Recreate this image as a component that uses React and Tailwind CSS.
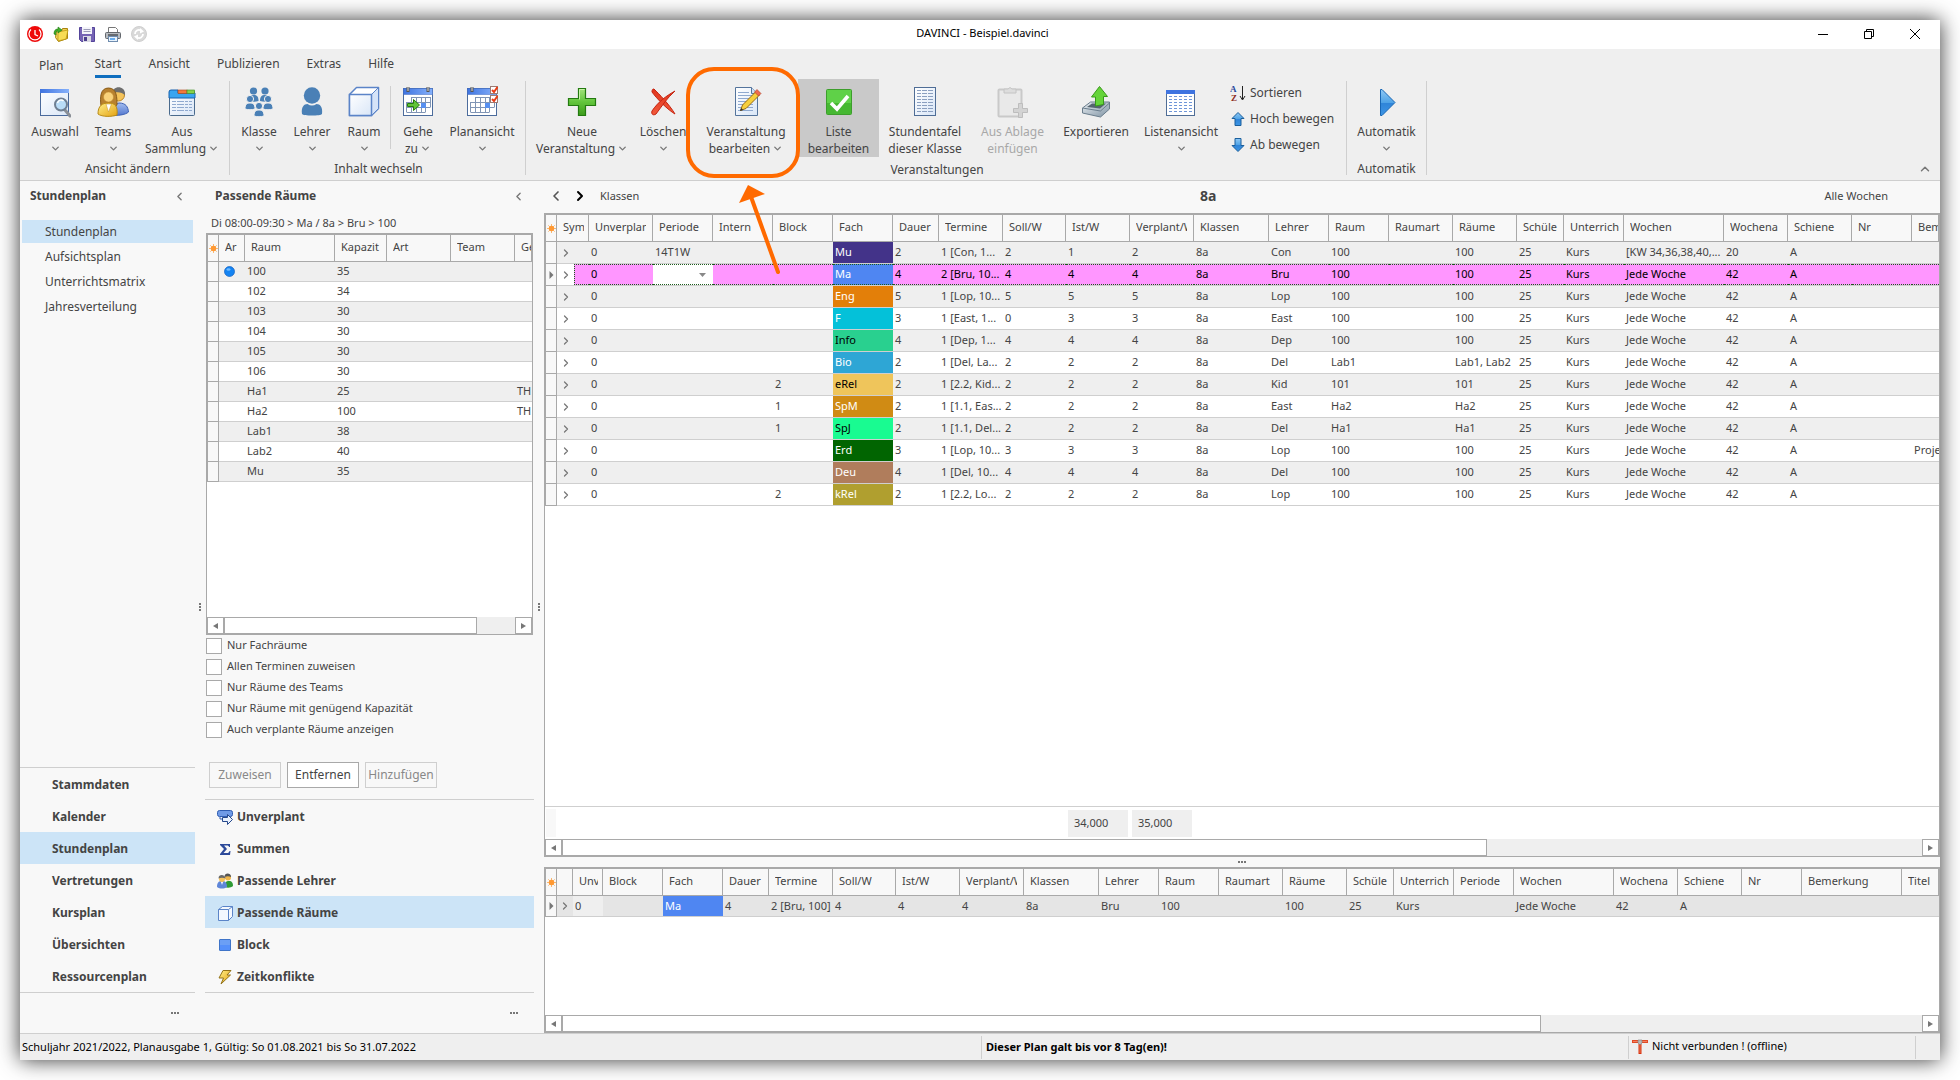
import React, { useState } from 'react';
import clsx from 'clsx';
import { ChevronLeft, ChevronRight, ChevronDown, ChevronUp } from 'lucide-react';

/* ---------- Icons ---------- */

const Grads = () => (
    <svg width="0" height="0" className="absolute" aria-hidden="true">
        <defs>
            <linearGradient id="gPaper" x1="0" y1="0" x2="1" y2="1">
                <stop offset="0" stopColor="#ffffff" />
                <stop offset="1" stopColor="#d9e6f7" />
            </linearGradient>
            <linearGradient id="gBlue" x1="0" y1="0" x2="0" y2="1">
                <stop offset="0" stopColor="#8fc8f5" />
                <stop offset="0.5" stopColor="#4fa3e6" />
                <stop offset="0.51" stopColor="#2f84d8" />
                <stop offset="1" stopColor="#3d95e4" />
            </linearGradient>
            <linearGradient id="gGreen" x1="0" y1="0" x2="0" y2="1">
                <stop offset="0" stopColor="#a4e37c" />
                <stop offset="0.5" stopColor="#62c53c" />
                <stop offset="1" stopColor="#3d9b1c" />
            </linearGradient>
            <linearGradient id="gBar" x1="0" y1="0" x2="1" y2="0">
                <stop offset="0" stopColor="#3f74e0" />
                <stop offset="1" stopColor="#86b1fb" />
            </linearGradient>
            <linearGradient id="gGold" x1="0" y1="0" x2="1" y2="1">
                <stop offset="0" stopColor="#fff08a" />
                <stop offset="1" stopColor="#e3a112" />
            </linearGradient>
            <linearGradient id="gRed" x1="0" y1="0" x2="0" y2="1">
                <stop offset="0" stopColor="#e0341c" />
                <stop offset="1" stopColor="#f25a3c" />
            </linearGradient>
            <linearGradient id="gShirt" x1="0" y1="0" x2="0" y2="1">
                <stop offset="0" stopColor="#a3bdf0" />
                <stop offset="1" stopColor="#5478cf" />
            </linearGradient>
            <linearGradient id="gTray" x1="0" y1="0" x2="1" y2="1">
                <stop offset="0" stopColor="#e9eef2" />
                <stop offset="1" stopColor="#7f93a3" />
            </linearGradient>
        </defs>
    </svg>
);

const Ico = ({ size = 32, children }) => (
    <svg width={size} height={size} viewBox={`0 0 ${size} ${size}`} fill="none" className="shrink-0" aria-hidden="true">
        {children}
    </svg>
);

const IconAuswahl = () => (
    <Ico>
        <rect x="1.5" y="3.5" width="28" height="26" fill="url(#gPaper)" stroke="#4a6a9c" />
        <rect x="1" y="3" width="29" height="4" fill="url(#gBar)" />
        <path d="M26 24l5 6" stroke="#8a8f96" strokeWidth="3" strokeLinecap="round" />
        <circle cx="22" cy="18.500" r="6" fill="#b9dcf7" stroke="#6f7f92" strokeWidth="2" />
        <path d="M18.500 17c1-3 4-4 6-2" stroke="#fff" strokeWidth="1.500" />
    </Ico>
);

const IconTeams = () => (
    <Ico>
        <path d="M14 29c0-8 2-11 8-12 7 0 9 4 9.500 9-3 3-12 4-17.500 3z" fill="url(#gShirt)" stroke="#3f62b5" />
        <circle cx="21.500" cy="9" r="6" fill="#f4c35a" stroke="#b98524" />
        <path d="M15 8c0-9 14-9 13 1-3-3-9-4-13-1z" fill="#6e6e6e" />
        <path d="M4 20C3 12 3 2 11.500 2S20 12 20 19c-4 3-12 3-16 1z" fill="#b8812f" stroke="#8a5c18" />
        <path d="M1 28c0-8 4-11 10.500-11S21 20 20 29c-5 2-15 2-19-1z" fill="url(#gGold)" stroke="#b98a14" />
        <circle cx="11.500" cy="11" r="5" fill="#f9d27a" stroke="#c08b2a" strokeWidth="0.500" />
        <path d="M9 18l2.500 8 3-8z" fill="#fff" stroke="#c9972a" strokeWidth="0.500" />
    </Ico>
);

const IconSammlung = () => (
    <Ico>
        <rect x="3.500" y="4.500" width="25" height="25" rx="1" fill="url(#gPaper)" stroke="#4a6a8c" />
        <path d="M3 12V6q0-2 2-2h7v3h17v5z" fill="#39a5f0" stroke="#1a62ae" />
        <rect x="12" y="4" width="9" height="3.500" fill="#f2793c" stroke="#a8441a" strokeWidth="0.600" />
        <rect x="21" y="4" width="7.500" height="3.500" fill="#86d14a" stroke="#3e8a1e" strokeWidth="0.600" />
        {[15, 18, 21, 24].map((y) => (
            <path key={y} d={`M6 ${y}.5h20`} stroke="#8fa9cf" strokeDasharray="4 1 7 1 3 1" />
        ))}
    </Ico>
);

const Person = ({ x, y }) => (
    <g transform={`translate(${x} ${y})`} fill="#4a80b6">
        <circle cx="0" cy="0" r="3.600" />
        <path d="M-5 10c0-5 2-6 5-6s5 1 5 6c-3 1-7 1-10 0z" />
    </g>
);

const IconKlasse = () => (
    <Ico>
        <Person x={10.5} y={5} />
        <Person x={22} y={5} />
        <g stroke="#f0f0f0" strokeWidth="1">
            <Person x={7} y={13} />
            <Person x={25} y={13} />
            <Person x={16} y={20} />
        </g>
    </Ico>
);

const IconLehrer = () => (
    <Ico>
        <circle cx="16" cy="9.500" r="8.200" fill="#4a80b6" />
        <path d="M6 28c-1-7 2-10 5.500-10 3 2 6 2 9 0 3.500 0 6.500 3 5.500 10-1 2-19 2-20 0z" fill="#4a80b6" />
    </Ico>
);

const IconRaum = () => (
    <Ico>
        <path d="M1.500 8.500l7-7h22v21l-7 7h-22z" fill="#fff" stroke="#5b84c8" strokeWidth="1.500" strokeLinejoin="round" />
        <path d="M23.500 8.500l7-7v21l-7 7z" fill="#d5e3f8" stroke="#5b84c8" />
        <rect x="1.500" y="8.500" width="22" height="21" fill="url(#gPaper)" stroke="#5b84c8" strokeWidth="1.500" />
    </Ico>
);

const CalendarBase = () => (
    <>
        <rect x="1.500" y="2.500" width="29" height="27" fill="#fff" stroke="#4c6c9c" />
        <rect x="1.500" y="2.500" width="29" height="6" fill="url(#gBar)" stroke="#3f6bc4" strokeWidth="0.500" />
        <path d="M6 1v5M26 1v5" stroke="#555" strokeWidth="3" />
        <path d="M6 1v4M26 1v4" stroke="#ddd" strokeWidth="1" />
        <path d="M9.500 11.500h19M4.500 16.500h24M4.500 21.500h24M4.500 26.500h19M4.500 16v10M9.500 11v15M14.500 11v15M19.500 11v15M23.500 11v15M28.500 11v10" stroke="#8095b5" />
        <rect x="19" y="17" width="5" height="5" fill="#5790f0" />
    </>
);

const IconGeheZu = () => (
    <Ico>
        <CalendarBase />
        <path d="M5.500 17.500h6v-4l6 5.500-6 5.500v-4h-6z" fill="#5fc43a" stroke="#267d0c" />
    </Ico>
);

const IconPlanansicht = () => (
    <Ico>
        <CalendarBase />
        <rect x="24.500" y="0.500" width="7" height="7" fill="#fff" stroke="#9c7a72" />
        <rect x="24.500" y="9.500" width="7" height="7" fill="#fff" stroke="#9c7a72" />
        <path d="M26 4l2 2 3.500-5M26 13l2 2 3.500-5" stroke="#ea3a12" strokeWidth="2" />
    </Ico>
);

const IconNeue = () => (
    <Ico>
        <path d="M12.500 2.500h7v10h10v7h-10v10h-7v-10h-10v-7h10z" fill="url(#gGreen)" stroke="#237a10" strokeWidth="1.200" />
        <path d="M13.500 13.500v-10h5" stroke="#c6f2a6" />
    </Ico>
);

const IconLoeschen = () => (
    <Ico>
        <path d="M7 3c5 5 15 15 21 25-7-4-18-15-23-22 0-3 1-3 2-3z" fill="url(#gRed)" stroke="#c42410" />
        <path d="M28 5C20 12 15 20 9 28c-3 2-5 0-4-3C11 16 19 10 28 5z" fill="url(#gRed)" stroke="#c42410" />
    </Ico>
);

const IconBearbeiten = () => (
    <Ico>
        <path d="M5.500 1.500h16l6 6v22h-22z" fill="url(#gPaper)" stroke="#54749c" />
        <path d="M21.500 1.500v6h6" fill="#cfdff4" stroke="#54749c" />
        {[6, 9, 12, 15, 18, 21, 24].map((y) => (
            <path key={y} d={`M8 ${y}.5h${y < 9 ? 11 : 15}`} stroke="#8fa9cf" />
        ))}
        <path d="M10.500 24.500l2-5.500L26 5.500l3.500 3.500L16 22.500z" fill="#f6cf3c" stroke="#9a6a10" />
        <path d="M24.500 6l2.500-2.500 4 4L28.500 10z" fill="#ef6a4e" stroke="#a83a22" strokeWidth="0.600" />
        <path d="M10 25l1.200-3 2 2z" fill="#333" />
    </Ico>
);

const IconListe = () => (
    <Ico>
        <rect x="3.500" y="3.500" width="25" height="25" rx="1" fill="#5fd148" stroke="#3d9e2c" />
        <path d="M4 17h24v11H4z" fill="#46b832" />
        <path d="M8 17l6 6L25 10" stroke="#fff" strokeWidth="3.600" />
    </Ico>
);

const IconStundentafel = () => (
    <Ico>
        <rect x="5.500" y="1.500" width="21" height="28" fill="url(#gPaper)" stroke="#4f6d96" />
        {[4, 7, 10, 13, 16, 19, 22, 25].map((y) => (
            <path key={y} d={`M8 ${y}.5h16`} stroke="#8a9fc0" strokeDasharray="4 1 5 1 5" />
        ))}
    </Ico>
);

const IconAblage = () => (
    <Ico>
        <rect x="1.500" y="3.500" width="23" height="27" rx="1" fill="#e9e9e9" stroke="#c9c9c9" strokeWidth="2" />
        <path d="M7 7V3h4q2-3 4 0h4v4z" fill="#ddd" stroke="#c4c4c4" />
        <path d="M21.500 17.500h4v5h5v4h-5v5h-4v-5h-5v-4h5z" fill="#d3d3d3" stroke="#bdbdbd" />
    </Ico>
);

const IconExport = () => (
    <Ico>
        <path d="M2.500 22l8-6h19v7l-9 8-18-4z" fill="url(#gTray)" stroke="#6a7d8c" />
        <path d="M2.500 22l18 3 9-8" stroke="#6a7d8c" />
        <path d="M7 21l5-3.500h14l-6 5z" fill="#54646f" />
        <path d="M19.500 0.500l8 10h-4v8l-8 1.500v-9h-4z" fill="#65d43a" stroke="#38991a" />
    </Ico>
);

const IconListenansicht = () => (
    <Ico>
        <rect x="1.500" y="4.500" width="28" height="25" fill="#fff" stroke="#4f6d96" />
        <rect x="1" y="4" width="29" height="4" fill="#3f74e0" />
        {[10, 13, 16, 19, 22, 25].map((y) => (
            <path key={y} d={`M4 ${y}.5h23`} stroke="#6f96d8" strokeDasharray="3 2" />
        ))}
    </Ico>
);

const IconAutomatik = () => (
    <Ico>
        <path d="M9.500 3.500h1.500L24 16.500 11 29.500H9.500z" fill="url(#gBlue)" stroke="#1766b4" />
    </Ico>
);

const IconSort = () => (
    <Ico size={16}>
        <text x="0" y="7" fontSize="9" fontWeight="700" fontFamily="Liberation Serif, serif" fill="#27479c">A</text>
        <text x="1" y="16" fontSize="9" fontWeight="700" fontFamily="Liberation Serif, serif" fill="#8c2b20">Z</text>
        <path d="M12.500 1v13M10 11l2.500 4 2.500-4" stroke="#222" />
    </Ico>
);

const IconUp = () => (
    <Ico size={16}>
        <path d="M8 1.500l6 6h-3v7H5v-7H2z" fill="url(#gBlue)" stroke="#1b5f9c" />
    </Ico>
);

const IconDown = () => (
    <Ico size={16}>
        <path d="M8 14.500l6-6h-3v-7H5v7H2z" fill="url(#gBlue)" stroke="#1b5f9c" />
    </Ico>
);

const IconLogo = () => (
    <Ico size={16}>
        <circle cx="8" cy="8" r="8" fill="#ee0a0a" />
        <path d="M4 3.500a6 6 0 1 0 8 0" stroke="#fff" strokeWidth="1.200" />
        <path d="M8 4v4.500l3 1.500" stroke="#fff" strokeWidth="1.300" />
    </Ico>
);

const IconOpen = () => (
    <Ico size={16}>
        <path d="M3.500 4.500l5 1 1-3h5v10l-9 3-3-4z" fill="url(#gGold)" stroke="#a8850e" />
        <path d="M5 6l10-2-2 9-8 2z" fill="#f8dc55" stroke="#b8940f" strokeWidth="0.700" />
        <path d="M1 8c0-3 1-5 4-5V1l4 3-4 3V5C3 5 2.500 6 3 9z" fill="#3fae2a" stroke="#1f7a10" strokeWidth="0.600" />
    </Ico>
);

const IconSave = () => (
    <Ico size={16}>
        <path d="M0.500 1.500h15v14h-13l-2-2z" fill="#7563b4" stroke="#54449a" />
        <rect x="3" y="1" width="10" height="7" fill="#f4f4fa" />
        <path d="M4.500 3.500h7M4.500 5.500h7" stroke="#9c9cb8" />
        <rect x="4" y="10" width="8" height="6" fill="#d9d9e4" />
        <rect x="5" y="11" width="3" height="4" fill="#4b3d8c" />
    </Ico>
);

const IconPrint = () => (
    <Ico size={16}>
        <path d="M3.500 6.500v-5h7l2 2v3" fill="#fff" stroke="#777" />
        <rect x="0.500" y="6.500" width="15" height="6" rx="1" fill="#b7bbc0" stroke="#63676c" />
        <path d="M3 9h10" stroke="#4d5156" strokeWidth="1.500" />
        <rect x="3.500" y="10.500" width="9" height="5" fill="#e8f3fd" stroke="#6f8cae" />
        <rect x="5" y="12" width="5" height="2" fill="#69aef0" />
    </Ico>
);

const IconSync = () => (
    <Ico size={16}>
        <circle cx="8" cy="8" r="7.500" fill="#d9d9d9" stroke="#cfcfcf" />
        <path d="M4 8c0-3 3-5 6-3.500M12 8c0 3-3 5-6 3.500" stroke="#fff" strokeWidth="1.800" />
        <path d="M9 2l4 3.500-4 2zM7 14l-4-3.500 4-2z" fill="#fff" />
    </Ico>
);

const IconUnverplant = () => (
    <Ico size={16}>
        <rect x="0.500" y="1.500" width="15" height="6" rx="2" fill="#6f9ae6" stroke="#2f5cb0" />
        <path d="M3 8v2h3" stroke="#2f5cb0" />
        <path d="M5.500 8.500h5v-3l5 5-5 5v-3h-5z" fill="#e9f1fd" stroke="#27498c" />
    </Ico>
);

const IconSumme = () => (
    <Ico size={16}>
        <path d="M3 3h10v3h-1c0-1-1-1.500-2-1.500H7L10 8l-3.500 4H10c1.500 0 2-.5 2.500-2h1L13 14H3v-1l4-5-4-4z" fill="#2d4a9a" />
    </Ico>
);

const IconLehrerPaar = () => (
    <Ico size={16}>
        <path d="M8 14c0-5 1-6 4-6s4 2 4 5c-2 2-6 2-8 1z" fill="#2f9a34" />
        <circle cx="11" cy="4.500" r="3" fill="#f0b64a" />
        <path d="M7.500 4c0-5 7-4 6.500 0-2-1-4-1-6.500 0z" fill="#555" />
        <path d="M0 14c0-5 2-6 5-6s5 1 5 6c-3 2-7 2-10 0z" fill="#5f86d8" />
        <circle cx="5" cy="6" r="3" fill="#f6c45c" />
        <path d="M1.500 5.500c0-5 7-4 7 0-2-1-5-1-7 0z" fill="#6a6a6a" />
        <path d="M4 9l1 3 1-3z" fill="#fff" />
    </Ico>
);

const IconCube = () => (
    <Ico size={16}>
        <path d="M1.500 4.500l4-3h10v10l-4 4h-10z" fill="#f4f8fe" stroke="#5b84c8" />
        <path d="M1.500 4.500h10v11M11.500 4.500l4-3" stroke="#5b84c8" />
    </Ico>
);

const IconBlock = () => (
    <Ico size={16}>
        <rect x="2.500" y="2.500" width="11" height="11" rx="0.500" fill="#6b9ff5" stroke="#3f74c8" />
        <path d="M3 8h10v5H3z" fill="#5590fa" />
    </Ico>
);

const IconBlitz = () => (
    <Ico size={16}>
        <path d="M6 1.500h8l-4 4.500h3.500L4 15l2.500-6H2z" fill="url(#gGold)" stroke="#93731a" strokeLinejoin="round" />
    </Ico>
);

const IconOffline = () => (
    <Ico size={16}>
        <path d="M0 2.500h16" stroke="#e24a26" strokeWidth="3" />
        <path d="M8 5v10" stroke="#d8300c" strokeWidth="3" />
        <path d="M1 2.500h14M8 6v8" stroke="#f79a7a" strokeWidth="0.700" />
        <path d="M6 1h4v3L8 6 6 4z" fill="#b9b9b9" stroke="#7c7c7c" strokeWidth="0.600" />
    </Ico>
);

const Sun = () => (
    <svg width="9" height="9" viewBox="0 0 9 9" className="mx-auto" aria-hidden="true">
        <path d="M4.500 0v9M0 4.500h9M1.300 1.300l6.400 6.400M7.700 1.300L1.300 7.700" stroke="#f9b873" strokeWidth="1" />
        <circle cx="4.500" cy="4.500" r="2.700" fill="#ff9933" />
    </svg>
);

const RowMarker = () => (
    <svg width="5" height="8" viewBox="0 0 5 8" className="mx-auto" aria-hidden="true">
        <path d="M0.500 0v8l4-4z" fill="#777" />
    </svg>
);

const Dots = ({ vertical }) => (
    <span className={clsx("flex gap-px", vertical && "flex-col")}>
        <i className="w-0.5 h-0.5 bg-[#777]" />
        <i className="w-0.5 h-0.5 bg-[#777]" />
        <i className="w-0.5 h-0.5 bg-[#777]" />
    </span>
);

/* ---------- Data ---------- */

const TABS = ['Start', 'Ansicht', 'Publizieren', 'Extras', 'Hilfe'];

const VIEWS = ['Stundenplan', 'Aufsichtsplan', 'Unterrichtsmatrix', 'Jahresverteilung'];

const MODULES = ['Stammdaten', 'Kalender', 'Stundenplan', 'Vertretungen', 'Kursplan', 'Übersichten', 'Ressourcenplan'];

const PANELS = [
    { label: 'Unverplant', Icon: IconUnverplant },
    { label: 'Summen', Icon: IconSumme },
    { label: 'Passende Lehrer', Icon: IconLehrerPaar },
    { label: 'Passende Räume', Icon: IconCube },
    { label: 'Block', Icon: IconBlock },
    { label: 'Zeitkonflikte', Icon: IconBlitz },
];

const ROOM_COLS = [
    { label: 'Ar', w: 'w-[26px] pr-[4px]' },
    { label: 'Raum', w: 'w-[90px]' },
    { label: 'Kapazit', w: 'w-[52px] pr-[4px]' },
    { label: 'Art', w: 'w-[64px]' },
    { label: 'Team', w: 'w-[64px]' },
    { label: 'Ge', w: 'pr-0' },
];

const ROOMS = [
    ['100', '35', ''],
    ['102', '34', ''],
    ['103', '30', ''],
    ['104', '30', ''],
    ['105', '30', ''],
    ['106', '30', ''],
    ['Ha1', '25', 'TH'],
    ['Ha2', '100', 'TH'],
    ['Lab1', '38', ''],
    ['Lab2', '40', ''],
    ['Mu', '35', ''],
];

const FILTERS = [
    'Nur Fachräume',
    'Allen Terminen zuweisen',
    'Nur Räume des Teams',
    'Nur Räume mit genügend Kapazität',
    'Auch verplante Räume anzeigen',
];

const COLS = [
    { key: 'sym', label: 'Sym', w: 'w-[32px] pr-[4px]' },
    { key: 'unv', label: 'Unverplan', w: 'w-[64px] pr-[6px]' },
    { key: 'periode', label: 'Periode', w: 'w-[60px]' },
    { key: 'intern', label: 'Intern', w: 'w-[60px]' },
    { key: 'block', label: 'Block', w: 'w-[60px]' },
    { key: 'fach', label: 'Fach', w: 'w-[60px]' },
    { key: 'dauer', label: 'Dauer', w: 'w-[46px] pr-[4px]' },
    { key: 'termine', label: 'Termine', w: 'w-[64px]' },
    { key: 'soll', label: 'Soll/W', w: 'w-[63px]' },
    { key: 'ist', label: 'Ist/W', w: 'w-[64px]' },
    { key: 'verplant', label: 'Verplant/W', w: 'w-[64px] pr-[6px]' },
    { key: 'klassen', label: 'Klassen', w: 'w-[75px]' },
    { key: 'lehrer', label: 'Lehrer', w: 'w-[60px]' },
    { key: 'raum', label: 'Raum', w: 'w-[60px]' },
    { key: 'raumart', label: 'Raumart', w: 'w-[64px]' },
    { key: 'raeume', label: 'Räume', w: 'w-[64px]' },
    { key: 'schueler', label: 'Schüle', w: 'w-[47px] pr-[4px]' },
    { key: 'unterricht', label: 'Unterrich', w: 'w-[60px] pr-[4px]' },
    { key: 'wochen', label: 'Wochen', w: 'w-[100px]' },
    { key: 'anzahl', label: 'Wochena', w: 'w-[64px] pr-[4px]' },
    { key: 'schiene', label: 'Schiene', w: 'w-[64px]' },
    { key: 'nr', label: 'Nr', w: 'w-[60px]' },
    { key: 'bemerkung', label: 'Bem', w: 'pr-0' },
];

const DETAIL_COLS = [
    { key: 'sym', label: '', w: 'w-[16px]' },
    { key: 'unv', label: 'Unv', w: 'w-[30px] pr-[4px]' },
    { key: 'block', label: 'Block', w: 'w-[60px]' },
    { key: 'fach', label: 'Fach', w: 'w-[60px]' },
    { key: 'dauer', label: 'Dauer', w: 'w-[46px] pr-[4px]' },
    { key: 'termine', label: 'Termine', w: 'w-[64px]' },
    { key: 'soll', label: 'Soll/W', w: 'w-[63px]' },
    { key: 'ist', label: 'Ist/W', w: 'w-[64px]' },
    { key: 'verplant', label: 'Verplant/W', w: 'w-[64px] pr-[6px]' },
    { key: 'klassen', label: 'Klassen', w: 'w-[75px]' },
    { key: 'lehrer', label: 'Lehrer', w: 'w-[60px]' },
    { key: 'raum', label: 'Raum', w: 'w-[60px]' },
    { key: 'raumart', label: 'Raumart', w: 'w-[64px]' },
    { key: 'raeume', label: 'Räume', w: 'w-[64px]' },
    { key: 'schueler', label: 'Schüle', w: 'w-[47px] pr-[4px]' },
    { key: 'unterricht', label: 'Unterrich', w: 'w-[60px] pr-[4px]' },
    { key: 'periode', label: 'Periode', w: 'w-[60px]' },
    { key: 'wochen', label: 'Wochen', w: 'w-[100px]' },
    { key: 'anzahl', label: 'Wochena', w: 'w-[64px] pr-[4px]' },
    { key: 'schiene', label: 'Schiene', w: 'w-[64px]' },
    { key: 'nr', label: 'Nr', w: 'w-[60px]' },
    { key: 'bemerkung', label: 'Bemerkung', w: 'w-[100px]' },
    { key: 'titel', label: 'Titel', w: '' },
];

const BASE = { unv: '0', klassen: '8a', schueler: '25', unterricht: 'Kurs', wochen: 'Jede Woche', anzahl: '42', schiene: 'A' };

const EVENTS = [
    { ...BASE, periode: '14T1W', fach: 'Mu', color: 'bg-[#433389] text-white', dauer: '2', termine: '1 [Con, 1...', soll: '2', ist: '1', verplant: '2', lehrer: 'Con', raum: '100', raeume: '100', wochen: '[KW 34,36,38,40,...', anzahl: '20' },
    { ...BASE, fach: 'Ma', color: 'bg-[#4f86f2] text-white', dauer: '4', termine: '2 [Bru, 10...', soll: '4', ist: '4', verplant: '4', lehrer: 'Bru', raum: '100', raeume: '100', selected: true },
    { ...BASE, fach: 'Eng', color: 'bg-[#e37f09] text-white', dauer: '5', termine: '1 [Lop, 10...', soll: '5', ist: '5', verplant: '5', lehrer: 'Lop', raum: '100', raeume: '100' },
    { ...BASE, fach: 'F', color: 'bg-[#04c1d9] text-white', dauer: '3', termine: '1 [East, 1...', soll: '0', ist: '3', verplant: '3', lehrer: 'East', raum: '100', raeume: '100' },
    { ...BASE, fach: 'Info', color: 'bg-[#29d08f] text-black', dauer: '4', termine: '1 [Dep, 1...', soll: '4', ist: '4', verplant: '4', lehrer: 'Dep', raum: '100', raeume: '100' },
    { ...BASE, fach: 'Bio', color: 'bg-[#2ea6d5] text-white', dauer: '2', termine: '1 [Del, La...', soll: '2', ist: '2', verplant: '2', lehrer: 'Del', raum: 'Lab1', raeume: 'Lab1, Lab2' },
    { ...BASE, block: '2', fach: 'eRel', color: 'bg-[#efc55b] text-black', dauer: '2', termine: '1 [2.2, Kid...', soll: '2', ist: '2', verplant: '2', lehrer: 'Kid', raum: '101', raeume: '101' },
    { ...BASE, block: '1', fach: 'SpM', color: 'bg-[#d08b14] text-white', dauer: '2', termine: '1 [1.1, Eas...', soll: '2', ist: '2', verplant: '2', lehrer: 'East', raum: 'Ha2', raeume: 'Ha2' },
    { ...BASE, block: '1', fach: 'SpJ', color: 'bg-[#19fb91] text-black', dauer: '2', termine: '1 [1.1, Del...', soll: '2', ist: '2', verplant: '2', lehrer: 'Del', raum: 'Ha1', raeume: 'Ha1' },
    { ...BASE, fach: 'Erd', color: 'bg-[#016501] text-white', dauer: '3', termine: '1 [Lop, 10...', soll: '3', ist: '3', verplant: '3', lehrer: 'Lop', raum: '100', raeume: '100', bemerkung: 'Proje' },
    { ...BASE, fach: 'Deu', color: 'bg-[#b07d5c] text-white', dauer: '4', termine: '1 [Del, 10...', soll: '4', ist: '4', verplant: '4', lehrer: 'Del', raum: '100', raeume: '100' },
    { ...BASE, block: '2', fach: 'kRel', color: 'bg-[#b09f2f] text-white', dauer: '2', termine: '1 [2.2, Lo...', soll: '2', ist: '2', verplant: '2', lehrer: 'Lop', raum: '100', raeume: '100' },
];

const DETAIL = { ...EVENTS[1], termine: '2 [Bru, 100]' };

/* ---------- Shared parts ---------- */

const RibbonButton = ({ icon, lines, arrow, w, active, disabled }) => (
    <button
        type="button"
        disabled={disabled}
        className={clsx(
            "h-[78px] pt-[7px] flex flex-col items-center shrink-0 whitespace-nowrap",
            w,
            active && "bg-[#c9c9c9]",
            disabled && "text-[#a8a8a8]"
        )}
    >
        {icon}
        <span className="mt-[5px] leading-[17px]">{lines[0]}</span>
        <span className="h-[17px] leading-[17px] flex items-center gap-0.5">
            {lines[1]}
            {arrow && <ChevronDown size={11} strokeWidth={3} className="text-[#777]" />}
        </span>
    </button>
);

const RibbonGroup = ({ title, children, className }) => (
    <div className={clsx("flex flex-col shrink-0", className)}>
        <div className="flex">{children}</div>
        <div className="h-[22px] leading-[23px] text-center">{title}</div>
    </div>
);

const RibbonLine = () => <div className="w-px h-[94px] mt-0.5 bg-[#cfcfcf] shrink-0" />;

const HeadCell = ({ label, w }) => (
    <th className={clsx("h-[27px] pl-[6px] pb-0.5 border-r border-b border-[#a9a9a9] bg-[#f8f8f8] font-normal text-left", w)}>
        <div className="overflow-hidden whitespace-nowrap">{label}</div>
    </th>
);

const MarkHead = () => (
    <th className="w-[12px] h-[27px] border-x border-b border-[#a9a9a9] bg-[#f8f8f8]" aria-label="Spalten">
        <Sun />
    </th>
);

const ScrollBar = ({ thumb }) => (
    <div className="h-[17px] flex bg-[#efefef] shrink-0">
        <button type="button" aria-label="Nach links" className="w-[17px] flex items-center justify-center bg-white border border-[#a9a9a9]">
            <svg width="5" height="6" viewBox="0 0 5 6"><path d="M5 0v6L0 3z" fill="#777" /></svg>
        </button>
        <div className="flex-1">
            <div className={clsx("h-full bg-white border border-[#a9a9a9]", thumb)} />
        </div>
        <button type="button" aria-label="Nach rechts" className="w-[17px] flex items-center justify-center bg-white border border-[#a9a9a9]">
            <svg width="5" height="6" viewBox="0 0 5 6"><path d="M0 0v6l5-3z" fill="#777" /></svg>
        </button>
    </div>
);

/* ---------- Window areas ---------- */

const TitleBar = () => (
    <header className="h-[29px] pb-0.5 flex items-center bg-white text-black shrink-0">
        <div className="flex-1 flex items-center gap-[10px] pl-[7px]">
            <IconLogo />
            <button type="button" aria-label="Öffnen"><IconOpen /></button>
            <button type="button" aria-label="Speichern"><IconSave /></button>
            <button type="button" aria-label="Drucken"><IconPrint /></button>
            <button type="button" aria-label="Aktualisieren" disabled><IconSync /></button>
        </div>
        <h1>DAVINCI - Beispiel.davinci</h1>
        <div className="flex-1 flex justify-end pr-0.5">
            <button type="button" aria-label="Minimieren" className="w-[46px] h-[26px] flex items-center justify-center">
                <svg width="10" height="10" viewBox="0 0 10 10"><path d="M0 5.500h10" stroke="#000" /></svg>
            </button>
            <button type="button" aria-label="Wiederherstellen" className="w-[46px] h-[26px] flex items-center justify-center">
                <svg width="10" height="10" viewBox="0 0 10 10" fill="none"><path d="M0.500 2.500h7v7h-7zM2.500 2.500v-2h7v7h-2" stroke="#000" /></svg>
            </button>
            <button type="button" aria-label="Schließen" className="w-[46px] h-[26px] flex items-center justify-center">
                <svg width="10" height="10" viewBox="0 0 10 10"><path d="M0 0l10 10M10 0L0 10" stroke="#000" /></svg>
            </button>
        </div>
    </header>
);

const Ribbon = () => (
    <div className="bg-[#efefef] border-b border-[#cfcfcf] text-xs shrink-0">
        <nav className="h-[30px] pt-1 pl-[19px] flex gap-[27px]">
            <button type="button" className="h-[25px] leading-[25px] mr-1">Plan</button>
            {TABS.map((t) => (
                <button
                    key={t}
                    type="button"
                    className={clsx("h-[25px] leading-[22px] border-b-[3px]", t === 'Start' ? "border-[#106ebe]" : "border-transparent")}
                >
                    {t}
                </button>
            ))}
        </nav>
        <div className="flex">
            <RibbonGroup title="Ansicht ändern" className="w-[209px] pl-[6px]">
                <RibbonButton icon={<IconAuswahl />} lines={['Auswahl']} arrow w="w-[58px]" />
                <RibbonButton icon={<IconTeams />} lines={['Teams']} arrow w="w-[58px]" />
                <RibbonButton icon={<IconSammlung />} lines={['Aus', 'Sammlung']} arrow w="w-[80px]" />
            </RibbonGroup>
            <RibbonLine />
            <RibbonGroup title="Inhalt wechseln" className="w-[295px] pl-0.5">
                <RibbonButton icon={<IconKlasse />} lines={['Klasse']} arrow w="w-[54px]" />
                <RibbonButton icon={<IconLehrer />} lines={['Lehrer']} arrow w="w-[52px]" />
                <RibbonButton icon={<IconRaum />} lines={['Raum']} arrow w="w-[52px]" />
                <div className="w-px h-[63px] mt-[7px] bg-[#cfcfcf]" />
                <RibbonButton icon={<IconGeheZu />} lines={['Gehe', 'zu']} arrow w="w-[54px]" />
                <RibbonButton icon={<IconPlanansicht />} lines={['Planansicht']} arrow w="w-[74px]" />
            </RibbonGroup>
            <RibbonLine />
            <RibbonGroup title="Veranstaltungen" className="w-[820px] pl-[6px] pr-1">
                <RibbonButton icon={<IconNeue />} lines={['Neue', 'Veranstaltung']} arrow w="w-[100px]" />
                <RibbonButton icon={<IconLoeschen />} lines={['Löschen']} arrow w="w-[62px]" />
                <RibbonButton icon={<IconBearbeiten />} lines={['Veranstaltung', 'bearbeiten']} arrow w="w-[104px]" />
                <RibbonButton icon={<IconListe />} lines={['Liste', 'bearbeiten']} active w="w-[81px]" />
                <RibbonButton icon={<IconStundentafel />} lines={['Stundentafel', 'dieser Klasse']} w="w-[92px]" />
                <RibbonButton icon={<IconAblage />} lines={['Aus Ablage', 'einfügen']} disabled w="w-[83px]" />
                <RibbonButton icon={<IconExport />} lines={['Exportieren']} w="w-[84px]" />
                <RibbonButton icon={<IconListenansicht />} lines={['Listenansicht']} arrow w="w-[86px]" />
                <div className="flex flex-col pt-px pl-[6px]">
                    <button type="button" className="h-[26px] flex items-center gap-1"><IconSort />Sortieren</button>
                    <button type="button" className="h-[26px] flex items-center gap-1 whitespace-nowrap"><IconUp />Hoch bewegen</button>
                    <button type="button" className="h-[26px] flex items-center gap-1 whitespace-nowrap"><IconDown />Ab bewegen</button>
                </div>
            </RibbonGroup>
            <RibbonLine />
            <RibbonGroup title="Automatik" className="w-[79px]">
                <RibbonButton icon={<IconAutomatik />} lines={['Automatik']} arrow w="w-[79px]" />
            </RibbonGroup>
            <RibbonLine />
            <button type="button" aria-label="Menüband einklappen" className="ml-auto mr-2 self-end mb-1 text-[#777]">
                <ChevronUp size={14} strokeWidth={2.5} />
            </button>
        </div>
    </div>
);

const PanelTitle = ({ children }) => (
    <div className="h-8 pb-0.5 pl-[10px] pr-[9px] flex items-center justify-between text-xs font-bold shrink-0">
        <h2>{children}</h2>
        <button type="button" aria-label="Einklappen" className="text-[#777]"><ChevronLeft size={13} strokeWidth={2.5} /></button>
    </div>
);

const PanelFooter = () => (
    <div className="h-[41px] border-t border-[#cfcfcf] flex items-center justify-end pr-4 shrink-0">
        <button type="button" aria-label="Mehr"><Dots /></button>
    </div>
);

const Sidebar = () => (
    <aside className="w-[175px] flex flex-col shrink-0">
        <PanelTitle>Stundenplan</PanelTitle>
        <nav className="flex-1 flex flex-col gap-0.5 pt-[7px] px-0.5 text-xs">
            {VIEWS.map((v, i) => (
                <a key={v} href="#" className={clsx("h-[23px] leading-[23px] pl-[23px]", i === 0 && "bg-[#cce4f7]")}>{v}</a>
            ))}
        </nav>
        <nav className="border-t border-[#cfcfcf] flex flex-col text-xs font-bold">
            {MODULES.map((m) => (
                <a key={m} href="#" className={clsx("h-8 leading-[34px] pl-8", m === 'Stundenplan' && "bg-[#cce4f7]")}>{m}</a>
            ))}
        </nav>
        <PanelFooter />
    </aside>
);

const RoomCell = ({ children }) => (
    <td className="border-b border-[#cfcfcf] pl-[2px] pb-[2px] leading-[17px] overflow-hidden">{children}</td>
);

const RoomTable = () => (
    <table className="w-full table-fixed border-separate border-spacing-0">
        <thead>
            <tr>
                <MarkHead />
                {ROOM_COLS.map((c) => <HeadCell key={c.label} label={c.label} w={c.w} />)}
            </tr>
        </thead>
        <tbody>
            {ROOMS.map(([raum, kap, geb], i) => (
                <tr key={raum} className={i % 2 ? "bg-white" : "bg-[#efefef]"}>
                    <td className="h-5 bg-[#f8f8f8] border-x border-b border-[#a9a9a9]" />
                    <td className="border-b border-[#cfcfcf] pl-[5px]">
                        {i === 0 && (
                            <svg width="11" height="11" viewBox="0 0 11 11" aria-hidden="true">
                                <circle cx="5.500" cy="5.500" r="5" fill="#1383f2" stroke="#0f5fc0" strokeWidth="0.700" />
                                <ellipse cx="4.500" cy="3.500" rx="2" ry="1.300" fill="#6dbaff" />
                            </svg>
                        )}
                    </td>
                    <RoomCell>{raum}</RoomCell>
                    <RoomCell>{kap}</RoomCell>
                    <RoomCell />
                    <RoomCell />
                    <RoomCell>{geb}</RoomCell>
                </tr>
            ))}
        </tbody>
    </table>
);

const RoomPanel = () => {
    const [checked, setChecked] = useState({});

    return (
        <section className="w-[329px] flex flex-col shrink-0">
            <PanelTitle>Passende Räume</PanelTitle>
            <div className="h-5 leading-5 pl-[6px]">Di 08:00-09:30 &gt; Ma / 8a &gt; Bru &gt; 100</div>
            <div className="flex-1 flex flex-col ml-px mr-px bg-white border border-t-2 border-[#a9a9a9] overflow-hidden">
                <div className="flex-1"><RoomTable /></div>
                <ScrollBar thumb="w-[87%]" />
            </div>
            <div className="pl-px">
                {FILTERS.map((f) => (
                    <label key={f} className="h-[21px] flex items-center gap-[5px]">
                        <input
                            type="checkbox"
                            checked={!!checked[f]}
                            onChange={(e) => setChecked({ ...checked, [f]: e.target.checked })}
                            className="appearance-none w-4 h-4 bg-white border border-[#a9a9a9] checked:bg-[#106ebe]"
                        />
                        {f}
                    </label>
                ))}
            </div>
            <div className="flex gap-[6px] pt-[22px] pb-[11px] pl-1">
                <button type="button" disabled className="w-[72px] h-[26px] text-xs border border-[#cfcfcf] text-[#888]">Zuweisen</button>
                <button type="button" className="w-[72px] h-[26px] text-xs border border-[#a9a9a9] bg-white">Entfernen</button>
                <button type="button" disabled className="w-[72px] h-[26px] text-xs border border-[#cfcfcf] text-[#888]">Hinzufügen</button>
            </div>
            <nav className="border-t border-[#cfcfcf] flex flex-col text-xs font-bold">
                {PANELS.map(({ label, Icon }) => (
                    <a key={label} href="#" className={clsx("h-8 pt-px flex items-center gap-1 pl-3", label === 'Passende Räume' && "bg-[#cce4f7]")}>
                        <Icon />
                        {label}
                    </a>
                ))}
            </nav>
            <PanelFooter />
        </section>
    );
};

const EventCell = ({ col, row, detail }) => {
    const selected = row.selected && !detail;
    const line = selected && "border-y border-dotted border-[#1c5c1c]";
    const h = detail ? "h-5 leading-5" : selected ? "h-[21px] leading-[17px]" : "h-[21px] leading-[19px]";

    if (col.key === 'sym') {
        return (
            <td className="border-b border-[#cfcfcf]">
                <div className="flex items-center">
                    <button type="button" aria-label="Aufklappen" className={clsx("h-5 flex items-center justify-center text-[#777]", detail ? "w-4" : "w-[17px]")}>
                        <ChevronRight size={12} strokeWidth={2.5} />
                    </button>
                    {selected && <div className={clsx("flex-1 bg-[#ff96ff] border-l", h, line)} />}
                </div>
            </td>
        );
    }

    if (col.key === 'periode' && selected) {
        return (
            <td className="border-b border-[#cfcfcf]">
                <div className={clsx("flex items-center bg-white pr-[7px]", h, line)}>
                    <select aria-label="Periode" className="appearance-none w-full h-[19px] outline-none">
                        <option></option>
                        <option>14T1W</option>
                    </select>
                    <svg width="7" height="4" viewBox="0 0 7 4" className="shrink-0" aria-hidden="true"><path d="M0 0h7L3.500 4z" fill="#888" /></svg>
                </div>
            </td>
        );
    }

    return (
        <td className="border-b border-[#cfcfcf]">
            <div
                className={clsx(
                    "pl-[2px] overflow-hidden whitespace-nowrap",
                    h,
                    line,
                    selected && "text-black",
                    col.key === 'fach' ? row.color : selected && "bg-[#ff96ff]",
                    detail && col.key === 'unv' && "bg-[#efefef]"
                )}
            >
                {row[col.key]}
            </div>
        </td>
    );
};

const EventTable = ({ cols, rows, detail }) => (
    <table className="w-full table-fixed border-separate border-spacing-0">
        <thead>
            <tr>
                <MarkHead />
                {cols.map((c) => <HeadCell key={c.key} label={c.label} w={c.w} />)}
            </tr>
        </thead>
        <tbody>
            {rows.map((row, i) => (
                <tr key={row.fach} className={detail ? "bg-[#e5e5e5]" : i % 2 ? "bg-white" : "bg-[#efefef]"}>
                    <td className="bg-[#f8f8f8] border-x border-b border-[#a9a9a9]">
                        {row.selected && <RowMarker />}
                    </td>
                    {cols.map((c) => <EventCell key={c.key} col={c} row={row} detail={detail} />)}
                </tr>
            ))}
        </tbody>
    </table>
);

const MainArea = () => (
    <main className="flex-1 min-w-0 flex flex-col">
        <div className="h-8 pb-0.5 flex items-center shrink-0">
            <div className="w-[47%] flex items-center">
                <button type="button" aria-label="Zurück" className="w-6 flex justify-center text-[#555]"><ChevronLeft size={16} strokeWidth={2.5} /></button>
                <button type="button" aria-label="Vor" className="w-6 flex justify-center text-black"><ChevronRight size={16} strokeWidth={3} /></button>
                <span className="pl-2">Klassen</span>
            </div>
            <h2 className="text-sm font-bold">8a</h2>
            <span className="ml-auto pr-[52px]">Alle Wochen</span>
        </div>

        <div className="flex-1 flex flex-col bg-white border border-t-2 border-[#a9a9a9] overflow-hidden">
            <div className="flex-1"><EventTable cols={COLS} rows={EVENTS} /></div>
            <div className="h-[33px] border-t border-[#cfcfcf] flex items-center pl-px shrink-0">
                <div className="w-[10px] h-7 bg-[#f8f8f8]" />
                <div className="w-[512px]" />
                <div className="w-[60px] h-[27px] leading-[25px] pl-[6px] bg-[#efefef]">34,000</div>
                <div className="w-1" />
                <div className="w-[60px] h-[27px] leading-[25px] pl-[6px] bg-[#efefef]">35,000</div>
            </div>
            <ScrollBar thumb="w-[68%]" />
        </div>

        <div className="h-[10px] flex items-center justify-center shrink-0"><Dots /></div>

        <div className="h-[166px] flex flex-col bg-white border border-t-2 border-[#a9a9a9] overflow-hidden shrink-0">
            <div className="flex-1"><EventTable cols={DETAIL_COLS} rows={[DETAIL]} detail /></div>
            <ScrollBar thumb="w-[72%]" />
        </div>
    </main>
);

const StatusBar = () => (
    <footer className="h-[27px] flex items-center bg-[#efefef] border-t border-[#cfcfcf] text-black shrink-0">
        <div className="flex-1 h-[23px] leading-[22px] pl-0.5">Schuljahr 2021/2022, Planausgabe 1, Gültig: So 01.08.2021 bis So 31.07.2022</div>
        <div className="w-[647px] h-[23px] leading-[22px] pl-1 border-l border-[#cfcfcf] font-bold">Dieser Plan galt bis vor 8 Tag(en)!</div>
        <div className="w-[287px] h-[23px] pb-px pl-[3px] border-l border-[#cfcfcf] flex items-center gap-1"><IconOffline />Nicht verbunden ! (offline)</div>
        <div className="w-[25px] h-[23px] border-l border-[#cfcfcf]" />
    </footer>
);

/* Orange marker around the "Veranstaltung bearbeiten" button */
const Callout = () => (
    <div className="absolute left-[666px] top-[47px] pointer-events-none">
        <div className="w-[114px] h-[111px] border-4 border-[#ff6a00] rounded-[28px]" />
        <svg width="114" height="100" viewBox="0 0 114 100" fill="none" aria-hidden="true">
            <path d="M64 16l28 78" stroke="#ff6a00" strokeWidth="4" strokeLinecap="round" />
            <path d="M62 7l17 9-26 9z" fill="#ff6a00" />
        </svg>
    </div>
);

const App = () => {
    return (
        <div className="min-h-screen bg-white p-5 flex font-['Noto_Sans',sans-serif] text-[11px] text-[#444]">
            <Grads />
            <div className="relative flex-1 min-w-0 flex flex-col bg-[#f8f8f8] shadow-[0_0_20px_rgba(0,0,0,0.8)]">
                <TitleBar />
                <Ribbon />
                <div className="flex-1 flex">
                    <Sidebar />
                    <div className="w-[10px] flex items-center justify-center shrink-0"><Dots vertical /></div>
                    <RoomPanel />
                    <div className="w-[10px] flex items-center justify-center shrink-0"><Dots vertical /></div>
                    <MainArea />
                </div>
                <StatusBar />
                <Callout />
            </div>
        </div>
    );
};

export default App;
